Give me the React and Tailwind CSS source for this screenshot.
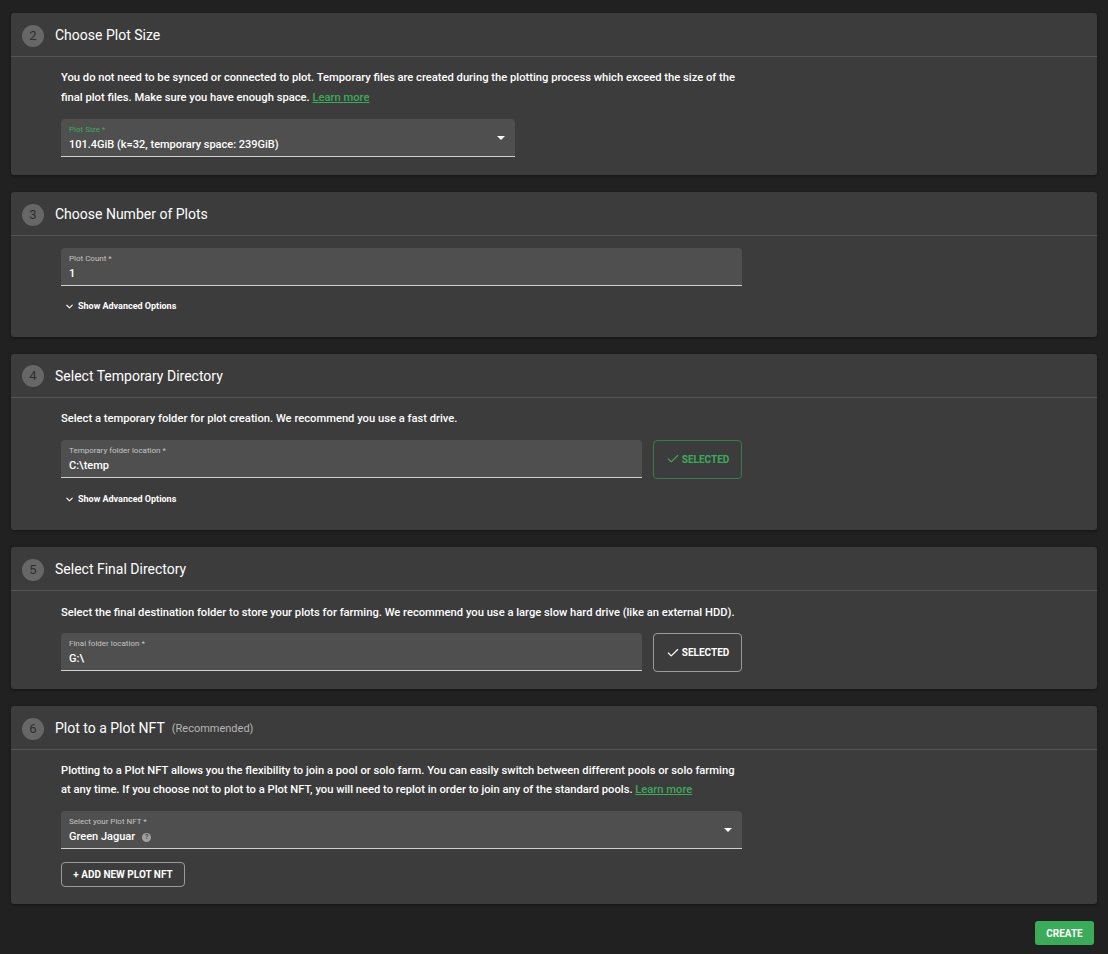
import { ChevronDown, Check } from "lucide-react";

const Card = ({ step, title, extra, children }) => (
  <div className="bg-[#3c3c3c] rounded-[3px] shadow-[0_1px_3px_rgba(0,0,0,0.4)]">
    <div className="h-[44px] flex items-center pl-[11px] pt-[2px] border-b border-[#555555]">
      <div className="w-[22px] h-[22px] rounded-full bg-[#676767] flex items-center justify-center text-[13px] text-[#2e2e2e]">
        {step}
      </div>
      <div className="ml-[11px] text-[14px] text-white">{title}</div>
      {extra && <div className="ml-[7px] mt-[2px] text-[11px] text-[#b5b5b5]">{extra}</div>}
    </div>
    <div className="pl-[50px]">{children}</div>
  </div>
);

const Field = ({ label, value, labelColor = "text-[#c4c4c4]", select, className = "", children }) => (
  <div className={`relative h-[38px] bg-[#4f4f4f] rounded-t-[4px] border-b border-[#d0d0d0] px-[8px] ${className}`}>
    <div className={`pt-[6px] text-[8px] leading-[10px] ${labelColor}`}>{label}</div>
    <div className="mt-[3px] text-[11px] leading-[14px] font-medium text-white flex items-center">
      {value}
      {children}
    </div>
    {select && (
      <div className="absolute right-[10px] top-[17px] w-0 h-0 border-l-[4px] border-r-[4px] border-t-[4px] border-l-transparent border-r-transparent border-t-white" />
    )}
  </div>
);

const Advanced = () => (
  <div className="flex items-center mt-[14px] ml-[3px] text-[9px] font-bold text-white">
    <ChevronDown size={11} strokeWidth={2.5} className="mr-[3px]" />
    Show Advanced Options
  </div>
);

const Learn = () => <span className="text-[#3aac59] underline">Learn more</span>;

export default function App() {
  return (
    <div className="min-h-[954px] bg-[#212121] px-[11px] pt-[13px] pb-[8px]" style={{ fontFamily: "Roboto, 'Liberation Sans', sans-serif" }}>
      <div className="flex flex-col gap-[17px]">
        <Card step="2" title="Choose Plot Size">
          <div className="w-[681px] pt-[11px] pb-[18px]">
            <p className="text-[11.2px] leading-[20px] font-medium text-white">
              You do not need to be synced or connected to plot. Temporary files are created during the plotting process which exceed the size of the final plot files. Make sure you have enough space. <Learn />
            </p>
            <Field className="w-[454px] mt-[11px]" label="Plot Size *" labelColor="text-[#3aac59]" value="101.4GiB (k=32, temporary space: 239GiB)" select />
          </div>
        </Card>

        <Card step="3" title="Choose Number of Plots">
          <div className="w-[681px] pt-[12px] pb-[23px]">
            <Field label="Plot Count *" value="1" />
            <Advanced />
          </div>
        </Card>

        <Card step="4" title="Select Temporary Directory">
          <div className="w-[681px] pt-[11px] pb-[24px]">
            <p className="text-[11.2px] leading-[20px] font-medium text-white">
              Select a temporary folder for plot creation. We recommend you use a fast drive.
            </p>
            <div className="flex gap-[11px] mt-[11px]">
              <Field className="w-[581px]" label="Temporary folder location *" value="C:\temp" />
              <div className="w-[89px] h-[39px] border border-[#3a7a4c] rounded-[4px] flex items-center justify-center text-[10px] font-bold text-[#3aac59]">
                <Check size={14} strokeWidth={2} className="mr-[2px]" />
                SELECTED
              </div>
            </div>
            <Advanced />
          </div>
        </Card>

        <Card step="5" title="Select Final Directory">
          <div className="w-[681px] pt-[12px] pb-[17px]">
            <p className="text-[11.2px] leading-[20px] font-medium text-white">
              Select the final destination folder to store your plots for farming. We recommend you use a large slow hard drive (like an external HDD).
            </p>
            <div className="flex gap-[11px] mt-[10px]">
              <Field className="w-[581px]" label="Final folder location *" value="G:\" />
              <div className="w-[89px] h-[39px] border border-[#9a9a9a] rounded-[4px] flex items-center justify-center text-[10px] font-bold text-white">
                <Check size={14} strokeWidth={2} className="mr-[2px]" />
                SELECTED
              </div>
            </div>
          </div>
        </Card>

        <Card step="6" title="Plot to a Plot NFT" extra="(Recommended)">
          <div className="w-[681px] pt-[11px] pb-[17px]">
            <p className="text-[11.2px] leading-[19px] font-medium text-white">
              Plotting to a Plot NFT allows you the flexibility to join a pool or solo farm. You can easily switch between different pools or solo farming at any time. If you choose not to plot to a Plot NFT, you will need to replot in order to join any of the standard pools. <Learn />
            </p>
            <Field className="mt-[12px]" label="Select your Plot NFT *" value="Green Jaguar" select>
              <span className="ml-[7px] w-[9px] h-[9px] rounded-full bg-[#a0a0a0] text-[#4f4f4f] text-[7px] font-bold flex items-center justify-center">?</span>
            </Field>
            <div className="mt-[13px] w-[124px] h-[25px] border border-[#9a9a9a] rounded-[4px] flex items-center justify-center text-[10px] font-bold text-white">
              + ADD NEW PLOT NFT
            </div>
          </div>
        </Card>
      </div>
      <div className="flex justify-end mt-[17px] pr-[3px]">
        <div className="w-[59px] h-[24px] bg-[#3aac59] rounded-[3px] flex items-center justify-center text-[10px] font-bold text-white">
          CREATE
        </div>
      </div>
    </div>
  );
}
